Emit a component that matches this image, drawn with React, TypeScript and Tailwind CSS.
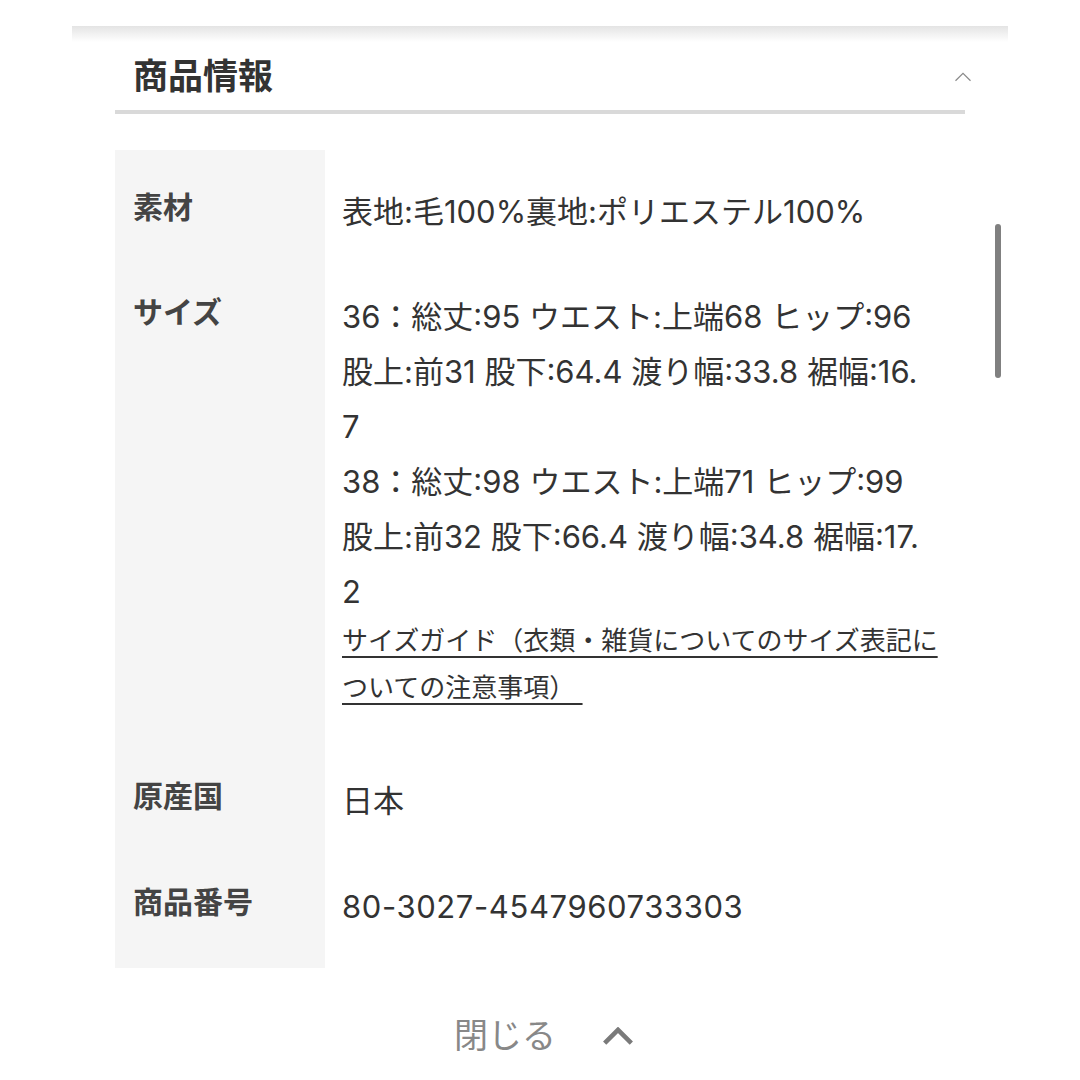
import React from 'react';

const font = { fontFamily: '"Noto Sans CJK JP", "Noto Sans", sans-serif' };
const valueFont = { fontFamily: 'Inter, "Noto Sans CJK JP", sans-serif' };

type Row = { label: string; lines: string[]; link?: string[] };

const rows: Row[] = [
  { label: '素材', lines: ['表地:毛100%裏地:ポリエステル100%'] },
  {
    label: 'サイズ',
    lines: [
      '36：総丈:95 ウエスト:上端68 ヒップ:96',
      '股上:前31 股下:64.4 渡り幅:33.8 裾幅:16.',
      '7',
      '38：総丈:98 ウエスト:上端71 ヒップ:99',
      '股上:前32 股下:66.4 渡り幅:34.8 裾幅:17.',
      '2',
    ],
    link: ['サイズガイド（衣類・雑貨についてのサイズ表記に', 'ついての注意事項） '],
  },
  { label: '原産国', lines: ['日本'] },
  { label: '商品番号', lines: ['80-3027-4547960733303'] },
];

function ChevronUp({ className, strokeWidth }: { className: string; strokeWidth: number }) {
  return (
    <svg viewBox="0 0 24 14" fill="none" className={className}>
      <path d="M2 12 L12 2 L22 12" stroke="currentColor" strokeWidth={strokeWidth} strokeLinecap="butt" strokeLinejoin="miter" />
    </svg>
  );
}

const rowPad = (i: number, row: Row) =>
  `${i === 0 ? 'pt-[34px]' : i === 1 ? 'pt-[25px]' : 'pt-[26px]'} ${
    i === rows.length - 1 ? 'pb-[34px]' : row.link ? 'pb-[36px]' : 'pb-[25px]'
  }`;

export default function App() {
  return (
    <div className="relative w-[1080px] h-[1080px] bg-white overflow-hidden" style={font}>
      {/* shadow from the block above */}
      <div className="mx-[72px] mt-[26px] h-[16px] bg-gradient-to-b from-[#e4e4e4] to-white" />

      <div className="mx-[115px]">
        <div className="flex items-center justify-between h-[72px] pb-[6px] pl-[18px] border-b-4 border-[#d9d9d9]">
          <h2 className="text-[35px] font-bold text-[#333] leading-none">商品情報</h2>
          <ChevronUp className="w-[18px] h-[12px] mt-[8px] mr-[-7px] text-[#8a8a8a]" strokeWidth={1.6} />
        </div>

        <div className="mt-[36px] flex flex-col">
          {rows.map((row, i) => (
            <div key={row.label} className="flex">
              <div className={`w-[210px] shrink-0 bg-[#f5f5f5] pl-[18px] ${rowPad(i, row)}`}>
                <span className="block text-[30px] leading-[42px] font-bold text-[#444]">{row.label}</span>
              </div>
              <div className={`flex-1 pl-[17px] ${rowPad(i, row)}`} style={valueFont}>
                {row.lines.map((line, j) => (
                  <div
                    key={j}
                    className={`text-[31px] leading-[55px] text-[#333] whitespace-pre ${
                      i === rows.length - 1 ? 'tracking-[0.6px]' : ''
                    }`}
                  >
                    {line}
                  </div>
                ))}
                {row.link && (
                  <div className="mt-[-2px]">
                    {row.link.map((line, j) => (
                      <div key={j} className="text-[26px] leading-[47px] text-[#333]">
                        <a href="#" className="underline underline-offset-[6px] decoration-[1.5px] whitespace-pre">
                          {line}
                        </a>
                      </div>
                    ))}
                  </div>
                )}
              </div>
            </div>
          ))}
        </div>
      </div>

      <div className="mt-[49px] flex items-center justify-center gap-[46px] pl-[8px]">
        <span className="text-[34px] text-[#888] leading-none">閉じる</span>
        <ChevronUp className="w-[32px] h-[19px] mt-[4px] text-[#7a7a7a]" strokeWidth={3.4} />
      </div>

      {/* scroll indicator */}
      <div className="absolute left-[995px] top-[224px] w-[6px] h-[154px] rounded-full bg-[#808080]" />
    </div>
  );
}
